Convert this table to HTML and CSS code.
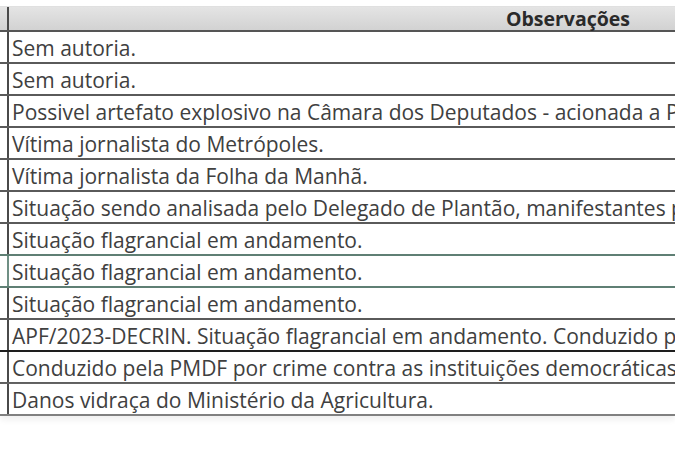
FILE: index.html
```html
<!DOCTYPE html>
<html lang="pt-BR">
<head>
<meta charset="utf-8">
<link rel="stylesheet" href="styles.css">
</head>
<body>
<div class="sheet">
  <div class="row head"><div class="cell">Observações</div></div>
  <div class="row"><div class="cell">Sem autoria.</div></div>
  <div class="row"><div class="cell">Sem autoria.</div></div>
  <div class="row"><div class="cell">Possivel artefato explosivo na Câmara dos Deputados - acionada a Polícia Legislativa.</div></div>
  <div class="row"><div class="cell">Vítima jornalista do Metrópoles.</div></div>
  <div class="row"><div class="cell">Vítima jornalista da Folha da Manhã.</div></div>
  <div class="row"><div class="cell">Situação sendo analisada pelo Delegado de Plantão, manifestantes presos.</div></div>
  <div class="row sel-top"><div class="cell">Situação flagrancial em andamento.</div></div>
  <div class="row sel"><div class="cell">Situação flagrancial em andamento.</div></div>
  <div class="row"><div class="cell">Situação flagrancial em andamento.</div></div>
  <div class="row dark"><div class="cell">APF/2023-DECRIN. Situação flagrancial em andamento. Conduzido pela PMDF.</div></div>
  <div class="row"><div class="cell">Conduzido pela PMDF por crime contra as instituições democráticas.</div></div>
  <div class="row last"><div class="cell">Danos vidraça do Ministério da Agricultura.</div></div>
</div>
</body>
</html>
```
FILE: styles.css
```css
html, body {
  margin: 0;
  padding: 0;
  background: #ffffff;
  overflow: hidden;
  width: 675px;
  height: 450px;
}
.sheet {
  margin-top: 6px;
  width: 675px;
  display: flex;
  flex-direction: column;
  font-family: "Open Sans", "Liberation Sans", sans-serif;
  color: #404040;
}
.row {
  height: 32px;
  border-bottom: 2px solid #5a5a5a;
  box-sizing: border-box;
  display: flex;
}
.cell {
  margin-left: 7px;
  border-left: 2px solid #4a4a4a;
  flex: 1;
  min-width: 0;
  padding-left: 3px;
  font-size: 21px;
  line-height: 33px;
  height: 30px;
  white-space: nowrap;
  overflow-x: clip;
  overflow-y: visible;
}
.head {
  height: 26px;
  background: linear-gradient(#e4e4e4, #d2d2d2);
  border-top: 1px solid #e0e0e0;
  border-bottom: 2px solid #555555;
}
.head .cell {
  height: 23px;
  padding-left: 452px;
  text-align: center;
  font-size: 19.5px;
  font-weight: bold;
  line-height: 23px;
  color: #2a2a2a;
}
.sel-top {
  border-bottom-color: #5f7f74;
}
.sel {
  border-bottom-color: #5f7f74;
}
.sel .cell {
  border-left-color: #6f8f84;
}
.dark {
  border-bottom-color: #1e1e1e;
}
.last {
  border-bottom: 2px solid #808080;
  box-shadow: 0 4px 6px #f0f0f0;
}
```
